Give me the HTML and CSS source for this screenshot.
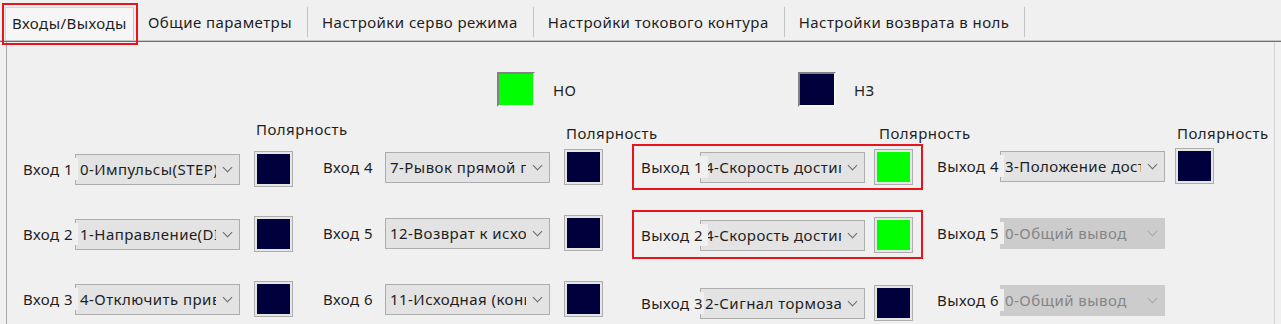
FILE: index.html
```html
<!DOCTYPE html>
<html lang="ru">
<head>
    <meta charset="UTF-8">
    <title>Входы/Выходы</title>
    <link rel="stylesheet" href="styles.css">
</head>
<body>
    <div class="tabs">
        <div class="tab active">Входы/Выходы</div>
        <div class="tab">Общие параметры</div>
        <div class="tab">Настройки серво режима</div>
        <div class="tab">Настройки токового контура</div>
        <div class="tab">Настройки возврата в ноль</div>
    </div>

    <div class="panel">
        <div class="legend">
            <div class="legend-item">
                <span class="lamp on"></span>
                <span>НО</span>
            </div>
            <div class="legend-item">
                <span class="lamp off"></span>
                <span>НЗ</span>
            </div>
        </div>

        <div class="columns">
            <!-- входы 1-3 -->
            <div class="col col-1">
                <div class="pol">Полярность</div>
                <div class="row">
                    <span class="label">Вход 1</span>
                    <div class="combo"><span class="value">0-Импульсы(STEP)</span><span class="arrow"></span></div>
                    <span class="swatch"><i class="off"></i></span>
                </div>
                <div class="row">
                    <span class="label">Вход 2</span>
                    <div class="combo"><span class="value">1-Направление(DIR)</span><span class="arrow"></span></div>
                    <span class="swatch"><i class="off"></i></span>
                </div>
                <div class="row">
                    <span class="label">Вход 3</span>
                    <div class="combo"><span class="value">4-Отключить привод</span><span class="arrow"></span></div>
                    <span class="swatch"><i class="off"></i></span>
                </div>
            </div>

            <!-- входы 4-6 -->
            <div class="col col-2">
                <div class="pol">Полярность</div>
                <div class="row">
                    <span class="label">Вход 4</span>
                    <div class="combo"><span class="value">7-Рывок прямой подачи</span><span class="arrow"></span></div>
                    <span class="swatch"><i class="off"></i></span>
                </div>
                <div class="row">
                    <span class="label">Вход 5</span>
                    <div class="combo"><span class="value">12-Возврат к исходной</span><span class="arrow"></span></div>
                    <span class="swatch"><i class="off"></i></span>
                </div>
                <div class="row">
                    <span class="label">Вход 6</span>
                    <div class="combo"><span class="value">11-Исходная (концевик)</span><span class="arrow"></span></div>
                    <span class="swatch"><i class="off"></i></span>
                </div>
            </div>

            <!-- выходы 1-3 -->
            <div class="col col-3">
                <div class="pol">Полярность</div>
                <div class="row marked first">
                    <span class="label">Выход 1</span>
                    <div class="combo"><span class="value">4-Скорость достигнута</span><span class="arrow"></span></div>
                    <span class="swatch"><i class="on"></i></span>
                </div>
                <div class="row marked second">
                    <span class="label">Выход 2</span>
                    <div class="combo"><span class="value">4-Скорость достигнута</span><span class="arrow"></span></div>
                    <span class="swatch"><i class="on"></i></span>
                </div>
                <div class="row">
                    <span class="label short">Выход 3</span>
                    <div class="combo"><span class="value">2-Сигнал тормоза</span><span class="arrow"></span></div>
                    <span class="swatch"><i class="off"></i></span>
                </div>
            </div>

            <!-- выходы 4-6 -->
            <div class="col col-4">
                <div class="pol">Полярность</div>
                <div class="row">
                    <span class="label">Выход 4</span>
                    <div class="combo"><span class="value">3-Положение достигнуто</span><span class="arrow"></span></div>
                    <span class="swatch"><i class="off"></i></span>
                </div>
                <div class="row">
                    <span class="label">Выход 5</span>
                    <div class="combo disabled"><span class="value">0-Общий вывод</span><span class="arrow"></span></div>
                </div>
                <div class="row">
                    <span class="label">Выход 6</span>
                    <div class="combo disabled"><span class="value">0-Общий вывод</span><span class="arrow"></span></div>
                </div>
            </div>
        </div>
    </div>
</body>
</html>
```

FILE: styles.css
```css
body {
    margin: 0;
    background: #f0f0f0;
    font-family: "Noto Sans", "Open Sans", sans-serif;
    font-size: 15px;
    letter-spacing: 0.45px;
    color: #1e1e1e;
    height: 324px;
    overflow: hidden;
}

/* tab strip */
.tabs {
    display: flex;
    height: 42px;
    padding: 7px 0 0 5px;
    box-sizing: border-box;
    border-bottom: 1px solid #6f6f6f;
    box-shadow: 0 -1px 0 #c4c4c4 inset;
}
.tab {
    height: 30px;
    line-height: 30px;
    padding: 0 15px 0 14px;
    border-right: 1px solid #c3c3c3;
    white-space: nowrap;
}
.tab.active {
    position: relative;
    height: 32px;
    padding: 0 6px;
    background: #f6f6f6;
    border: 1px solid #d6d6d6;
    border-bottom: none;
    border-right-color: #c3c3c3;
}
.tab.active::after {
    content: "";
    position: absolute;
    left: -4px;
    top: -5px;
    right: -5px;
    bottom: -5px;
    border: 2px solid #e8141c;
}

/* content panel */
.panel {
    margin-left: 6px;
    margin-right: 6px;
    height: 282px;
    border-left: 1px solid #a8a8a8;
    border-right: 1px solid #d4d4d4;
}
.legend {
    display: flex;
    padding: 30px 0 0 490px;
    height: 35px;
}
.legend-item {
    display: flex;
    align-items: center;
    gap: 18px;
    width: 301px;
}
.lamp {
    width: 34px;
    height: 31px;
    border: 2px solid;
    border-color: #828282 #f8f8f8 #f8f8f8 #828282;
}
.lamp.on { background: #00ff00; }
.lamp.off { background: #00003c; }

.columns {
    display: grid;
    grid-template-columns: 300px 318px 296px 1fr;
    padding: 12px 0 0 13px;
}
.col {
    display: flex;
    flex-direction: column;
    align-items: flex-start;
}
.col-2, .col-3, .col-4 { padding-top: 4px; }
.col-1 { gap: 29px; }
.col-2 { gap: 30px; }
.col-3 { gap: 32px; }
.col-4 { gap: 31px; }

.pol {
    height: 20px;
    line-height: 20px;
    white-space: nowrap;
}
.col-1 .pol { margin-left: 236px; margin-bottom: -17px; }
.col-2 .pol { margin-left: 246px; margin-bottom: -24px; }
.col-3 .pol { margin-left: 241px; margin-bottom: -26px; }
.col-4 .pol { margin-left: 243px; margin-bottom: -26px; }

.row {
    display: flex;
    align-items: center;
    height: 36px;
}
.label {
    position: relative;
    z-index: 1;
    box-sizing: border-box;
    height: 22px;
    line-height: 22px;
    padding-left: 3px;
    background: #f0f0f0;
    white-space: nowrap;
    overflow: hidden;
}
.col-1 .label { width: 58px; margin-right: -3px; }
.col-2 .label { width: 65px; background: none; }
.col-3 .label { width: 70px; margin-right: -8px; }
.col-3 .label.short { width: 66px; margin-right: -4px; }
.col-4 .label { width: 70px; margin-right: -4px; }

.combo {
    display: flex;
    align-items: center;
    box-sizing: border-box;
    width: 165px;
    height: 31px;
    padding: 0 6px 0 4px;
    background: #e3e3e3;
    border: 1px solid #adadad;
}
.combo .value {
    flex: 1;
    overflow: hidden;
    white-space: nowrap;
}
.combo .arrow {
    flex: none;
    width: 6px;
    height: 6px;
    margin: -4px 2px 0 8px;
    border-right: 1px solid #6a6a6a;
    border-bottom: 1px solid #6a6a6a;
    transform: rotate(45deg);
}
.combo.disabled {
    background: #cccccc;
    border-color: #cccccc;
    color: #858585;
}
.combo.disabled .arrow { border-color: #a8a8a8; }

.swatch {
    box-sizing: border-box;
    width: 39px;
    height: 36px;
    padding: 2px;
    border: 1px solid #adadad;
    background: #e6e6e6;
}
.col-1 .swatch, .col-2 .swatch { margin-left: 14px; }
.col-3 .swatch { margin-left: 9px; }
.col-4 .swatch { margin-left: 10px; }
.swatch i {
    display: block;
    height: 100%;
}
.swatch .off { background: #00003c; }
.swatch .on { background: #00ff00; }

/* red annotation frames */
.marked { position: relative; }
.marked::after {
    content: "";
    position: absolute;
    left: -6px;
    right: -10px;
    top: -5px;
    bottom: -5px;
    border: 2px solid #e8141c;
}
.marked.second::after { top: -7px; bottom: -6px; }
```
